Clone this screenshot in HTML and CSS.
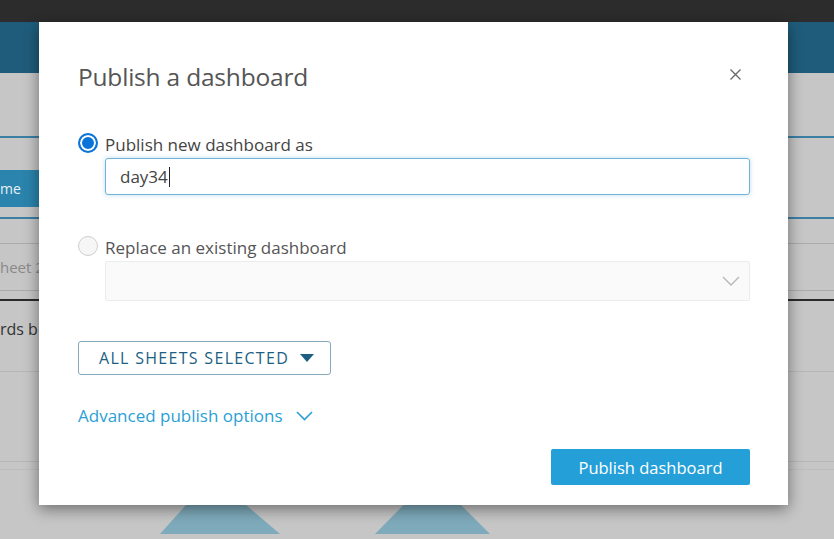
FILE: index.html
```html
<!DOCTYPE html>
<html>
<head>
<meta charset="utf-8">
<link rel="stylesheet" href="styles.css">
</head>
<body>
<div class="app">
  <div class="topbar"></div>
  <div class="appbar"></div>
  <div class="content">
    <div class="seg seg1"></div>
    <div class="seg seg2"><div class="homebtn">me</div></div>
    <div class="seg seg3"></div>
    <div class="seg seg4"><span class="tab">heet 2</span></div>
    <div class="seg seg5"></div>
    <div class="seg seg6"><span class="txt">rds b</span></div>
    <div class="seg seg7"></div>
    <div class="seg seg8"></div>
    <div class="seg seg9">
      <svg class="chart" width="834" height="70" viewBox="0 0 834 70">
        <polygon points="160,68 212,10 280,68" fill="#7eaabb"/>
        <polygon points="375,68 432,10 490,68" fill="#7eaabb"/>
      </svg>
    </div>
  </div>
</div>

<div class="modal">
  <div class="modal-head">
    <h1 class="title">Publish a dashboard</h1>
    <svg class="close" width="11" height="11" viewBox="0 0 11 11"><path d="M0.5 0.5 L10.5 10.5 M10.5 0.5 L0.5 10.5" stroke="#666" stroke-width="1.3" fill="none"/></svg>
  </div>
  <div class="option">
    <label class="radio-row">
      <span class="radio on"></span>
      <span class="label">Publish new dashboard as</span>
    </label>
    <div class="input">day34<span class="caret"></span></div>
  </div>
  <div class="option opt2">
    <label class="radio-row">
      <span class="radio off"></span>
      <span class="label light">Replace an existing dashboard</span>
    </label>
    <div class="select">
      <svg width="18" height="10" viewBox="0 0 18 10"><path d="M1 1 L9 9 L17 1" fill="none" stroke="#b8b8b8" stroke-width="1.4"/></svg>
    </div>
  </div>
  <div class="sheets">
    <button class="sheetsbtn">ALL SHEETS SELECTED <svg width="14" height="8" viewBox="0 0 14 8"><path d="M0 0 H14 L7 8 Z" fill="#1d5f83"/></svg></button>
  </div>
  <div class="advanced">
    <span>Advanced publish options</span>
    <svg width="17" height="10" viewBox="0 0 17 10"><path d="M1 1 L8.5 8.5 L16 1" fill="none" stroke="#2b9fd6" stroke-width="1.6"/></svg>
  </div>
  <div class="footer">
    <button class="primary">Publish dashboard</button>
  </div>
</div>
</body>
</html>
```

FILE: styles.css
```css
* { box-sizing: border-box; }
html, body { margin: 0; padding: 0; }
body {
  width: 834px;
  height: 539px;
  overflow: hidden;
  position: relative;
  font-family: "Open Sans", "Noto Sans", sans-serif;
  background: #c6c6c6;
}
.app { display: flex; flex-direction: column; height: 539px; }
.topbar { height: 22px; background: #2c2c2c; flex: none; }
.appbar { height: 51px; background: #1f5c7b; flex: none; }
.content { flex: 1; background: #c6c6c6; display: flex; flex-direction: column; }
.seg { flex: none; }
.seg1 { height: 65px; border-bottom: 2px solid #3b7fa3; }
.seg2 { height: 81px; padding-top: 32px; border-bottom: 2px solid #3b7fa3; }
.homebtn {
  width: 40px; height: 37px;
  background: #2a84ad; color: #e8f1f5; font-size: 14px;
  display: flex; align-items: center; padding-left: 0;
}
.seg3 { height: 25px; border-bottom: 1px solid #ababab; }
.seg4 { height: 47px; border-bottom: 1px solid #ababab; display: flex; align-items: center; }
.tab { color: #8a8a8a; font-size: 15px; }
.seg5 { height: 10px; border-bottom: 2px solid #2a2a2a; }
.seg6 { height: 71px; border-bottom: 1px solid #b6b6b6; padding-top: 17px; }
.txt { color: #333; font-size: 16px; }
.seg7 { height: 90px; border-bottom: 1px solid #b6b6b6; }
.seg8 { height: 8px; border-bottom: 1px solid #bdbdbd; }
.seg9 { flex: 1; overflow: hidden; }
.chart { display: block; margin-top: -4px; }

.modal {
  position: absolute;
  left: 39px; top: 22px;
  width: 749px; height: 483px;
  background: #fff;
  box-shadow: 0 4px 14px rgba(0,0,0,0.45);
  padding: 0 38px 0 39px;
  display: flex; flex-direction: column;
}
.modal-head {
  display: flex; justify-content: space-between; align-items: center;
  height: 110px;
}
.title {
  margin: -2px 0 0 0; font-weight: 400; font-size: 24.5px; color: #555;
  letter-spacing: -0.2px;
}
.close { margin-right: 9px; margin-top: -6px; }
.option { display: flex; flex-direction: column; }
.radio-row { display: flex; align-items: center; height: 22px; }
.radio {
  width: 20px; height: 20px; border-radius: 50%; flex: none;
  margin-right: 7px;
}
.radio.on {
  border: 2px solid #0b74d8; background: #0b74d8;
  box-shadow: inset 0 0 0 2px #fff;
}
.radio.off { border: 1px solid #cfcfcf; background: #f6f6f6; }
.label { font-size: 17px; color: #444; margin-top: 2px; }
.label.light { color: #555; }
.input {
  margin-left: 27px; margin-top: 4px;
  height: 37px; border: 1px solid #6fb3d6; border-radius: 3px;
  box-shadow: 0 0 5px rgba(110,180,220,0.45);
  font-size: 17px; color: #444;
  display: flex; align-items: center; padding-left: 14px;
}
.caret { display: inline-block; width: 1px; height: 20px; background: #222; margin-left: 1px; }
.opt2 { margin-top: 40px; }
.select {
  margin-left: 27px; margin-top: 4px;
  height: 40px; border: 1px solid #ececec; border-radius: 2px;
  background: #fafafa;
  display: flex; align-items: center; justify-content: flex-end; padding-right: 9px;
}
.sheets { margin-top: 40px; }
.sheetsbtn {
  height: 34px; width: 253px;
  border: 1px solid #86a8bb; border-radius: 3px; background: #fff;
  font-family: inherit; font-size: 16px; color: #1d5f83; letter-spacing: 1.3px;
  display: flex; align-items: center; justify-content: flex-start; gap: 11px;
  padding: 0 0 0 20px;
}
.advanced {
  margin-top: 29px; display: flex; align-items: center; gap: 13px;
  color: #2b9fd6; font-size: 17px;
}
.footer { display: flex; justify-content: flex-end; margin-top: 22px; }
.primary {
  width: 199px; height: 36px; border: none; border-radius: 2px;
  background: #249fd8; color: #fff; font-family: inherit; font-size: 16.5px;
}
```
